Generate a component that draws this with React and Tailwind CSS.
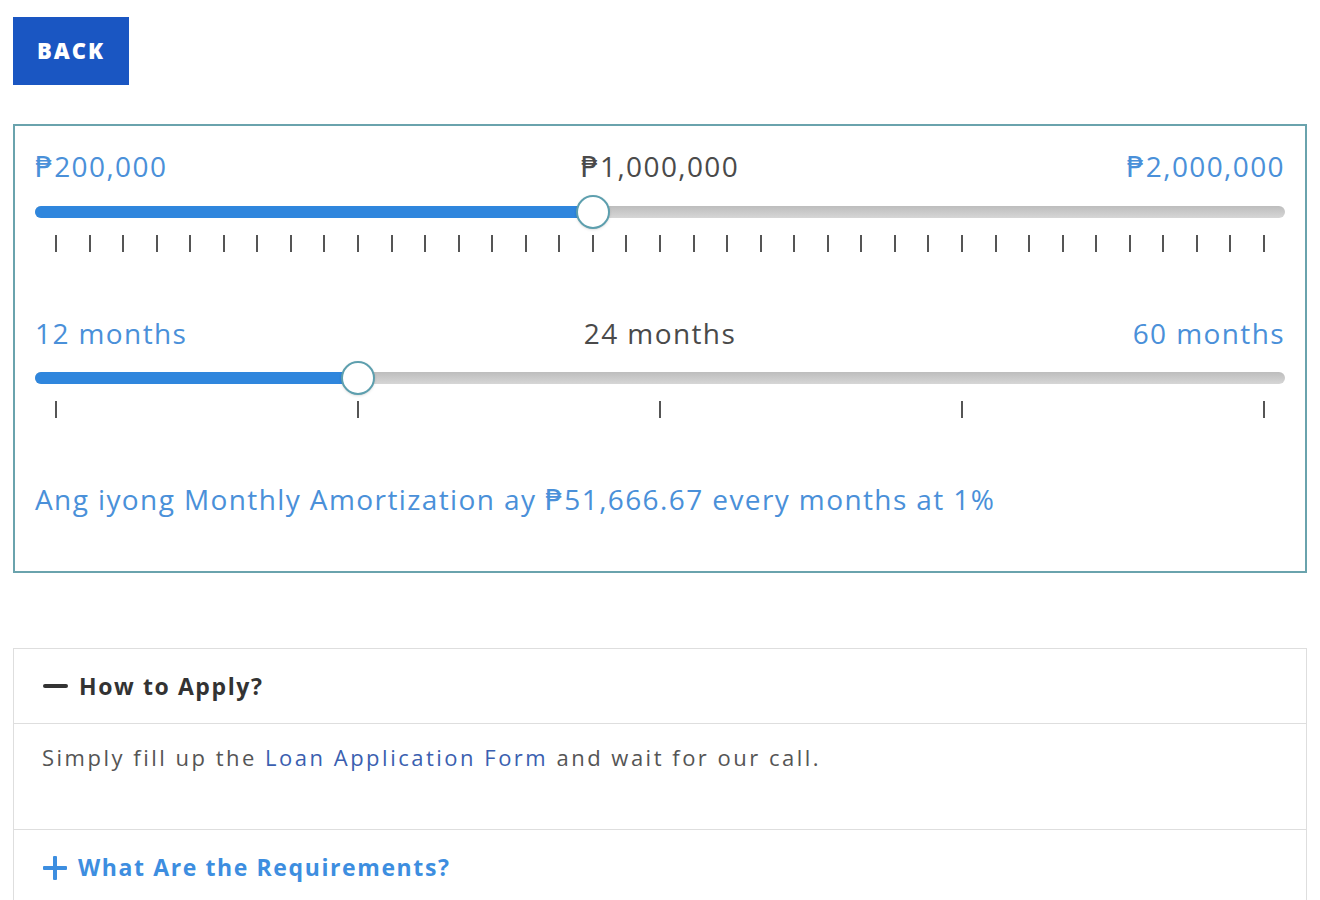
import { useState } from "react"

const font = { fontFamily: "'Open Sans', 'DejaVu Sans', sans-serif" }

function Slider({ min, max, value, ticks }) {
  const pct = (value - min) / (max - min)
  return (
    <div className="relative h-[60px]">
      <div className="absolute left-[21px] right-[21px] top-0 h-[12px]">
        <div className="absolute -left-[21px] -right-[21px] top-0 h-[12px] rounded-full bg-gradient-to-b from-[#bdbdbd] to-[#d6d6d6]" />
        <div
          className="absolute -left-[21px] top-0 h-[12px] rounded-l-full bg-[#2f86dd]"
          style={{ width: `calc(${pct * 100}% + 21px)` }}
        />
        <div
          className="absolute top-[-11px] w-[34px] h-[34px] -ml-[17px] rounded-full bg-white border-2 border-[#5d9fae] shadow"
          style={{ left: `${pct * 100}%` }}
        />
      </div>
      <div className="absolute left-[21px] right-[21px] top-[29px] h-[17px]">
        {Array.from({ length: ticks }).map((_, i) => (
          <div
            key={i}
            className="absolute top-0 w-[2px] h-[17px] -ml-[1px] bg-[#555]"
            style={{ left: `${(i / (ticks - 1)) * 100}%` }}
          />
        ))}
      </div>
    </div>
  )
}

export default function App() {
  const [open] = useState(true)

  return (
    <div className="min-h-[900px] bg-white px-[13px] pt-[17px]" style={font}>

      <button className="w-[116px] h-[68px] pb-[2px] bg-[#1a56c2] text-white font-extrabold text-[22px] tracking-[2px]">
        BACK
      </button>

      <div className="mt-[39px] border-2 border-[#6aa3ad] px-[20px] pt-[22px] h-[449px]">

        <div className="grid grid-cols-3 text-[28px] leading-[36px] tracking-[1.4px] text-[#4a90d9]">
          <span>₱200,000</span>
          <span className="text-center text-[#4a4a4a]">₱1,000,000</span>
          <span className="text-right">₱2,000,000</span>
        </div>
        <div className="mt-[22px]">
          <Slider min={200000} max={2000000} value={1000000} ticks={37} />
        </div>

        <div className="mt-[49px] grid grid-cols-3 text-[28px] leading-[36px] tracking-[1.4px] text-[#4a90d9]">
          <span>12 months</span>
          <span className="text-center text-[#4a4a4a]">24 months</span>
          <span className="text-right">60 months</span>
        </div>
        <div className="mt-[21px]">
          <Slider min={12} max={60} value={24} ticks={5} />
        </div>

        <p className="mt-[49px] text-[28px] leading-[36px] tracking-[1.4px] text-[#4a90d9]">
          Ang iyong Monthly Amortization ay ₱51,666.67 every months at 1%
        </p>
      </div>

      <div className="mt-[75px] border border-[#dedede] border-b-0">
        <div className="h-[75px] flex items-center gap-[11px] px-[29px] border-b border-[#dedede]">
          <span className="w-[25px] h-[4px] bg-[#333] rounded-sm" />
          <span className="font-bold text-[23px] tracking-[1.6px] text-[#333]">How to Apply?</span>
        </div>
        {open && (
          <div className="h-[106px] px-[28px] pt-[17px] border-b border-[#dedede] text-[22px] tracking-[2.5px] text-[#555]">
            Simply fill up the <a className="text-[#3b5fb0]">Loan Application Form</a> and wait for our call.
          </div>
        )}
        <div className="h-[75px] flex items-center gap-[10px] px-[28px]">
          <svg width="26" height="26" viewBox="0 0 26 26">
            <rect x="11" y="1" width="4" height="24" rx="1" fill="#3d8ee0" />
            <rect x="1" y="11" width="24" height="4" rx="1" fill="#3d8ee0" />
          </svg>
          <span className="font-bold text-[23px] tracking-[1.6px] text-[#3d8ee0]">What Are the Requirements?</span>
        </div>
      </div>

    </div>
  )
}
